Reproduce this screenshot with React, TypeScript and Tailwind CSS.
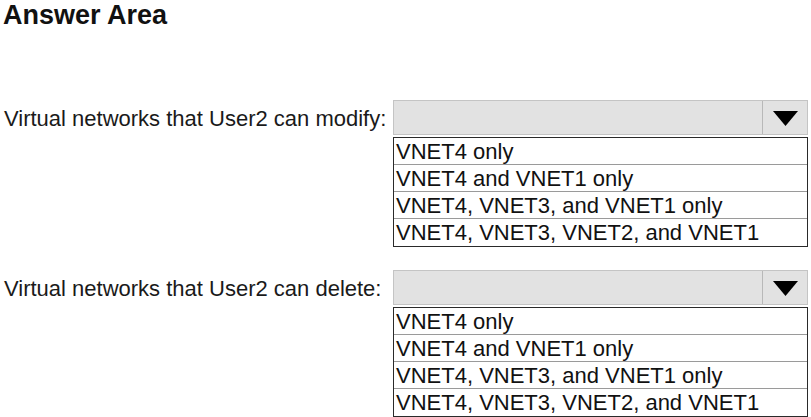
import React from "react";

const options = [
  "VNET4 only",
  "VNET4 and VNET1 only",
  "VNET4, VNET3, and VNET1 only",
  "VNET4, VNET3, VNET2, and VNET1",
];

function Dropdown() {
  return (
    <div className="flex w-[415px] flex-col gap-[2px]">
      <div className="flex h-[35px] border border-[#c4c4c4] bg-[#e2e2e2]">
        <div className="flex-1" />
        <div className="flex w-[45px] items-center justify-center border-l border-[#b8b8b8] pt-[2px]">
          <svg width="27" height="17" viewBox="0 0 27 17">
            <polygon points="1,1 26,1 13.5,16" fill="#000" />
          </svg>
        </div>
      </div>
      <div className="flex flex-col border border-[#2a2a2a] bg-white">
        {options.map((opt, i) => (
          <div
            key={opt}
            className={`flex h-[27px] items-center pl-[2px] pt-[1px] text-[22px] leading-none text-[#111] ${
              i < options.length - 1 ? "border-b border-[#9a9a9a]" : ""
            }`}
          >
            {opt}
          </div>
        ))}
      </div>
    </div>
  );
}

function Question({ label }: { label: string }) {
  return (
    <div className="flex items-start">
      <div className="flex h-[37px] w-[393px] items-center pl-[4px] text-[22px] text-[#1a1a1a]">
        {label}
      </div>
      <Dropdown />
    </div>
  );
}

export default function App() {
  return (
    <div
      className="h-[417px] w-[811px] overflow-hidden bg-white"
      style={{ fontFamily: '"Liberation Sans", Arial, sans-serif' }}
    >
      <h1 className="pl-[3px] text-[27px] font-bold leading-[30px] text-[#111]">
        Answer Area
      </h1>
      <div className="mt-[70px] flex flex-col gap-[23px]">
        <Question label="Virtual networks that User2 can modify:" />
        <Question label="Virtual networks that User2 can delete:" />
      </div>
    </div>
  );
}
